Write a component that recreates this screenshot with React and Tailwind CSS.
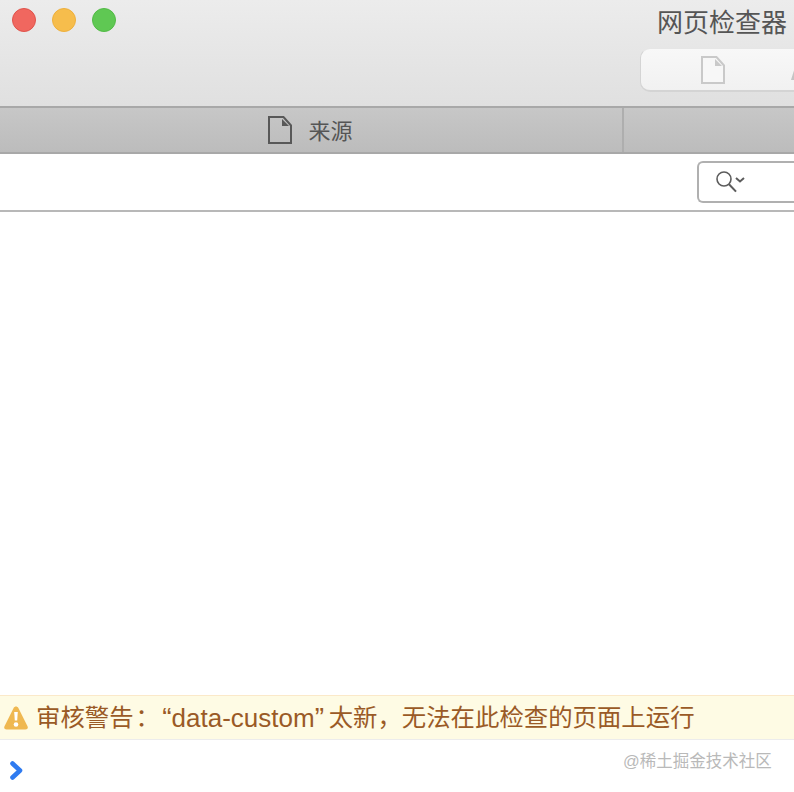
const FONT = 'font-["Helvetica_Neue","Liberation_Sans","Noto_Sans_CJK_SC",sans-serif]';

function PageIcon({ className, stroke, fold, fill = 'none' }) {
  return (
    <svg viewBox="0 0 24 28" className={className} fill="none">
      <path d="M1 1H15.5L23 9.5V27H1Z" stroke={stroke} strokeWidth="2" fill={fill} />
      <path d="M14 3V10H21Z" fill={fold} />
    </svg>
  );
}

function TrafficLight({ color, border }) {
  return <div className={`w-6 h-6 rounded-full border ${color} ${border}`} />;
}

export default function App() {
  return (
    <div className={`relative w-[794px] h-[792px] overflow-hidden bg-white flex flex-col ${FONT}`}>
      {/* Title bar */}
      <div className="h-[106px] shrink-0 bg-gradient-to-b from-[#ececec] to-[#e0e0e0] flex">
        <div className="flex gap-4 pl-3 pt-2 flex-1">
          <TrafficLight color="bg-[#f0675f]" border="border-[#e0534b]" />
          <TrafficLight color="bg-[#f6bd4c]" border="border-[#eeb03c]" />
          <TrafficLight color="bg-[#5fc853]" border="border-[#52bb46]" />
        </div>
        <div className="w-[154px] shrink-0 flex flex-col">
          <div className="h-12 pl-[17px] pt-[5px] text-[26px] leading-9 text-[#555555] whitespace-nowrap">网页检查器</div>
          <div className="w-[170px] h-[44px] bg-gradient-to-b from-[#f8f8f8] to-[#f1f1f1] rounded-l-[10px] border-b-2 border-l border-t border-[#d4d4d4] border-t-[#e6e6e6] flex items-center pl-[60px] gap-[66px]">
            <PageIcon className="w-6 h-[28px] shrink-0" stroke="#c9c9c9" fold="#c9c9c9" fill="#f7f7f7" />
            <svg viewBox="0 0 6 11" className="w-[6px] h-[11px] mt-[10px] shrink-0">
              <path d="M0 11L3.5 0H5V11Z" fill="#c4c4c4" />
            </svg>
          </div>
        </div>
      </div>

      {/* Tabs */}
      <div className="h-12 shrink-0 border-y-2 border-[#a8a8a8] bg-gradient-to-b from-[#c7c7c7] to-[#bcbcbc] flex">
        <div className="w-[622px] flex items-center justify-center gap-4 pr-[1px]">
          <PageIcon className="w-6 h-7" stroke="#585858" fold="#585858" />
          <span className="text-[22px] leading-7 pt-1 text-[#555555]">来源</span>
        </div>
        <div className="w-0.5 bg-[#aeaeae]" />
      </div>

      {/* Filter bar */}
      <div className="h-[58px] shrink-0 border-b-2 border-[#b8b8b8] flex justify-end items-start pt-[7px]">
        <div className="w-[97px] h-[42px] rounded-l-md border-2 border-r-0 border-[#b0b0b0] flex items-center pl-[17px]">
          <svg viewBox="0 0 22 22" className="w-[22px] h-[22px]" fill="none" stroke="#5c5c5c" strokeWidth="1.6">
            <circle cx="8" cy="8" r="7" />
            <path d="M13 13.2L20 20.6" strokeWidth="2" />
          </svg>
          <svg viewBox="0 0 10 6" className="w-[10px] h-[6px] mb-1 -ml-[3px]" fill="none" stroke="#5c5c5c" strokeWidth="2">
            <path d="M1 1L5 4.5L9 1" />
          </svg>
        </div>
      </div>

      {/* Content */}
      <div className="flex-1" />

      {/* Warning */}
      <div className="h-[45px] shrink-0 bg-[#fefbe4] border-t border-[#fbe9c9] border-b border-b-[#ececec] flex items-center pl-1 gap-2">
        <svg viewBox="0 0 24 24" className="w-6 h-6 shrink-0">
          <path d="M12 0.5C13 0.5 13.8 1 14.4 2L23.4 20C24.4 22 23.4 23.5 21.4 23.5H2.6C0.6 23.5 -0.4 22 0.6 20L9.6 2C10.2 1 11 0.5 12 0.5Z" fill="#efb851" />
          <path d="M10.2 6H13.8L13.2 14.5H10.8Z" fill="#fff" />
          <circle cx="12" cy="18.5" r="2.3" fill="#fff" />
        </svg>
        <div className="flex items-center text-[24.4px] leading-8 text-[#9a5a26] whitespace-nowrap">
          <span>审核警告</span>
          <span className="w-[23px] pl-[2px]">：</span>
          <span className="w-[15px] text-right text-[28px]">“</span>
          <span className="text-[26px]">data-custom</span>
          <span className="w-[14px] text-[28px]">”</span>
          <span>太新，无法在此检查的页面上运行</span>
        </div>
      </div>

      {/* Console prompt */}
      <div className="h-[52px] shrink-0 pl-[10px] pt-[21px]">
        <svg viewBox="0 0 13 19" className="w-[13px] h-[19px]" fill="none" stroke="#2f7bf0" strokeWidth="4.6" strokeLinecap="round" strokeLinejoin="round">
          <path d="M2.5 2.5L10 9.5L2.5 16.5" />
        </svg>
      </div>

      {/* Watermark */}
      <div className="absolute left-[623px] top-[750px] text-[16.5px] leading-[22px] text-[#b9b9b9] whitespace-nowrap">@稀土掘金技术社区</div>
    </div>
  );
}
